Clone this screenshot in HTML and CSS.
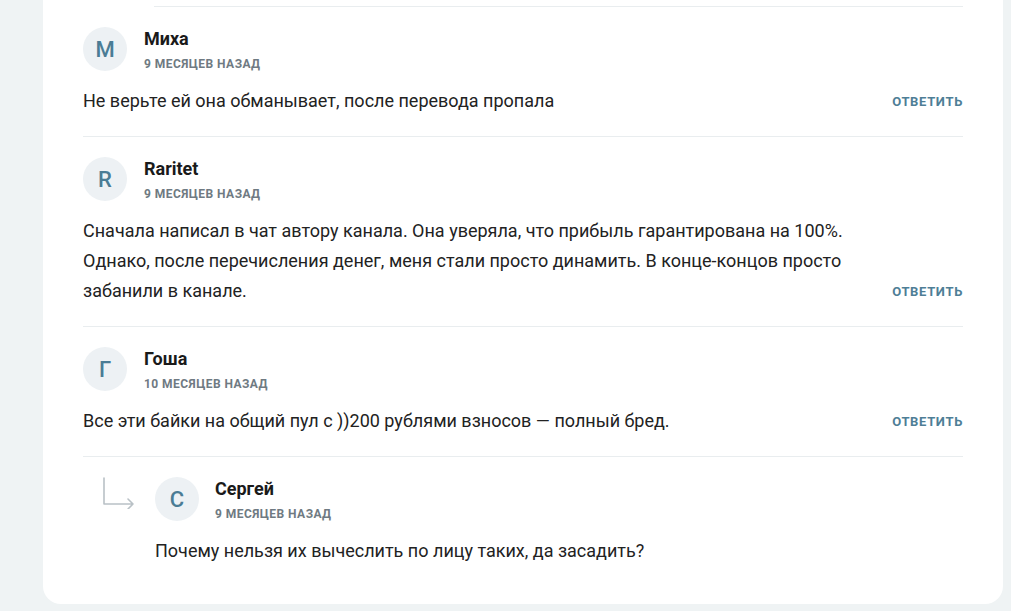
FILE: index.html
```html
<!DOCTYPE html>
<html lang="ru">
<head>
<meta charset="utf-8">
<link rel="stylesheet" href="styles.css">
</head>
<body>
<div class="page">
  <section class="card">
    <div class="divider divider--reply"></div>

    <article class="comment">
      <header class="comment-head">
        <div class="avatar">M</div>
        <div class="meta">
          <div class="name">Миха</div>
          <div class="time">9 месяцев назад</div>
        </div>
      </header>
      <div class="comment-body">
        <p class="text">Не верьте ей она обманывает, после перевода пропала</p>
        <a class="reply-link" href="#">Ответить</a>
      </div>
    </article>
    <div class="divider"></div>

    <article class="comment">
      <header class="comment-head">
        <div class="avatar">R</div>
        <div class="meta">
          <div class="name">Raritet</div>
          <div class="time">9 месяцев назад</div>
        </div>
      </header>
      <div class="comment-body">
        <p class="text">Сначала написал в чат автору канала. Она уверяла, что прибыль гарантирована на 100%. Однако, после перечисления денег, меня стали просто динамить. В конце-концов просто забанили в канале.</p>
        <a class="reply-link" href="#">Ответить</a>
      </div>
    </article>
    <div class="divider"></div>

    <article class="comment">
      <header class="comment-head">
        <div class="avatar">Г</div>
        <div class="meta">
          <div class="name">Гоша</div>
          <div class="time">10 месяцев назад</div>
        </div>
      </header>
      <div class="comment-body">
        <p class="text">Все эти байки на общий пул с ))200 рублями взносов — полный бред.</p>
        <a class="reply-link" href="#">Ответить</a>
      </div>
    </article>
    <div class="divider"></div>

    <article class="comment comment--reply">
      <svg class="reply-arrow" width="32" height="32" viewBox="0 0 32 32" aria-hidden="true">
        <path d="M1 1 V27 H30 M25 22 L30 27 L25 32" fill="none" stroke="#b9c1c6" stroke-width="1.6" stroke-linecap="round" stroke-linejoin="round"/>
      </svg>
      <header class="comment-head">
        <div class="avatar">C</div>
        <div class="meta">
          <div class="name">Сергей</div>
          <div class="time">9 месяцев назад</div>
        </div>
      </header>
      <div class="comment-body">
        <p class="text">Почему нельзя их вычеслить по лицу таких, да засадить?</p>
      </div>
    </article>
  </section>
</div>
</body>
</html>
```

FILE: styles.css
```css
* { box-sizing: border-box; }

html, body {
  margin: 0;
  padding: 0;
}

body {
  background: #eff3f4;
  font-family: Roboto, "Noto Sans", Arial, sans-serif;
  color: #1f1f1f;
}

.page {
  padding: 0 8px 8px 43px;
}

.card {
  background: #ffffff;
  border-radius: 0 0 18px 18px;
  padding: 6px 40px 38px 40px;
  width: 960px;
}

.divider {
  height: 1px;
  background: #e9edef;
}

.divider--reply {
  margin-left: 71px;
}

.comment {
  padding: 20px 0 20px 0;
}

.comment-head {
  display: flex;
  align-items: flex-start;
  gap: 17px;
}

.comment--reply .comment-head {
  gap: 16px;
}

.avatar {
  width: 44px;
  height: 44px;
  border-radius: 50%;
  background: #edf1f4;
  color: #4a7c95;
  font-size: 22px;
  font-weight: 500;
  display: flex;
  align-items: center;
  justify-content: center;
  flex-shrink: 0;
}

.meta {
  padding-top: 1px;
}

.name {
  font-size: 18px;
  font-weight: 700;
  line-height: 22px;
  color: #1a1a1a;
}

.time {
  margin-top: 8px;
  font-size: 12px;
  font-weight: 700;
  line-height: 13px;
  letter-spacing: 0.45px;
  text-transform: uppercase;
  color: #6f7a82;
}

.comment-body {
  margin-top: 15px;
  display: flex;
  align-items: flex-end;
  gap: 30px;
}

.text {
  margin: 0;
  flex: 1;
  font-size: 18px;
  line-height: 30px;
  color: #222222;
}

.reply-link {
  font-size: 13px;
  font-weight: 700;
  line-height: 28px;
  letter-spacing: 0.65px;
  text-transform: uppercase;
  color: #4e7e96;
  text-decoration: none;
  flex-shrink: 0;
}

.comment--reply {
  position: relative;
  padding-left: 72px;
  padding-bottom: 0;
}

.reply-arrow {
  position: absolute;
  left: 20px;
  top: 20px;
}
```
